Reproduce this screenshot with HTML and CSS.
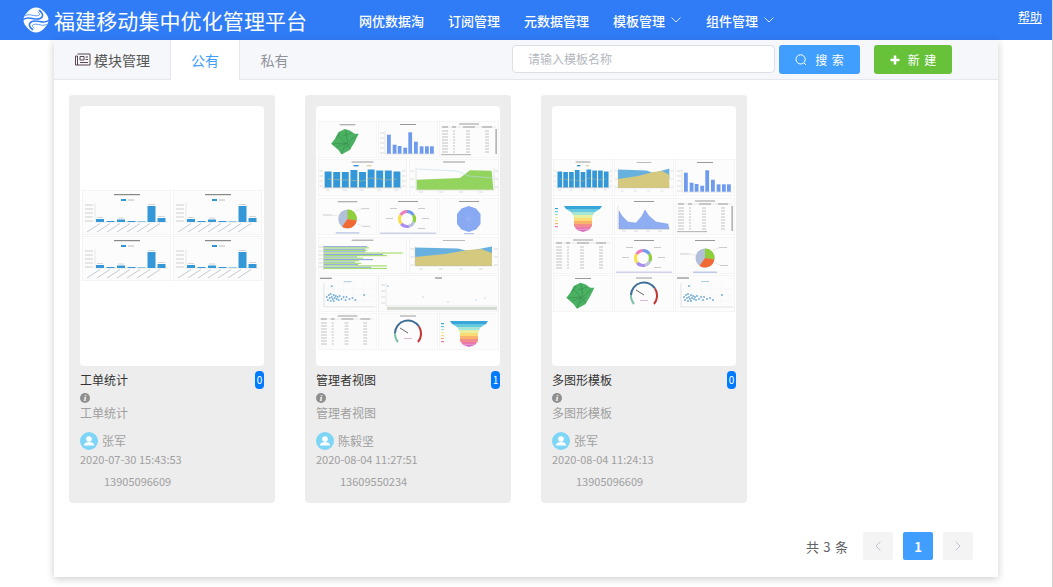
FILE: index.html
```html
<!DOCTYPE html>
<html lang="en">

    <head>
        <meta charset="UTF-8">
        <meta name="viewport" content="width=device-width, initial-scale=1.0">
        <title>福建移动集中优化管理平台</title>
        <link rel="stylesheet" href="styles.css">
    </head>

    <body>
        <!-- chart pieces used by the three template thumbnails -->
        <svg class="defs" xmlns="http://www.w3.org/2000/svg">
            <defs>
                <clipPath id="funnelClip">
                    <polygon points="11,8 49,8 47,11 42,14 40,17 39,20 39,28 36,32 30,34 24,32 21,28 21,20 20,17 18,14 13,11" />
                </clipPath>
            </defs>
            <symbol id="tile" viewBox="0 0 60 37" preserveAspectRatio="none">
                <rect width="60" height="37" fill="#fcfcfc" stroke="#ececec" stroke-width="0.8" />
            </symbol>
            <symbol id="bars" viewBox="0 0 60 37" preserveAspectRatio="none">
                <rect x="22" y="3" width="16" height="1" fill="#999" />
                <path d="M7 10V33H57" stroke="#ccc" stroke-width="0.5" fill="none" />
                <path d="M2 12H6M2 17H6M2 22H6M2 27H6M2 32H6" stroke="#ccc" stroke-width="0.7" />
                <g fill="#6f9bef">
                    <rect x="9" y="13.7" width="3.8" height="19" />
                    <rect x="14.7" y="23.7" width="3.8" height="9" />
                    <rect x="19.7" y="25" width="3.8" height="7.7" />
                    <rect x="25.3" y="26.7" width="3.8" height="6" />
                    <rect x="30.3" y="11.3" width="3.8" height="21.4" />
                    <rect x="36" y="20.7" width="3.8" height="12" />
                    <rect x="41.7" y="25.3" width="3.8" height="7.4" />
                    <rect x="47" y="25.3" width="3.8" height="7.4" />
                    <rect x="52" y="25.3" width="3.8" height="7.4" />
                </g>
            </symbol>
            <symbol id="map" viewBox="0 0 60 37">
                <rect x="22" y="3" width="16" height="1" fill="#999" />
                <polygon points="20.7,11 27.3,7.7 32.3,9.3 37.3,12.7 41.3,12.7 37.3,21 32.3,29.3 24,33.7 20.7,29.3 13.3,22.7 17.3,17.7" fill="#4cb263" />
                <path d="M20 14L28 22L24 33M28 9L30 22L38 15M15 23L28 22L33 28M23 11L18 18M25 15L34 12M19 26L30 22M27 28L33 22" stroke="#2f8045" stroke-width="0.5" fill="none" />
            </symbol>
            <symbol id="table" viewBox="0 0 60 37" preserveAspectRatio="none">
                <rect x="20" y="2.5" width="20" height="1" fill="#999" />
                <rect x="2" y="5" width="55" height="2" fill="#f2f2f2" />
                <path d="M3 6H9M13 6H17M24 6H36M43 6H53" stroke="#777" stroke-width="0.7" />
                <g stroke="#aaa" stroke-width="0.7">
                    <path d="M3 10H9M14 10H16M27 10H31M46 10H50" />
                    <path d="M3 13H9M14 13H16M27 13H31M46 13H50" />
                    <path d="M3 16H9M14 16H16M27 16H31M46 16H50" />
                    <path d="M3 19H9M14 19H16M27 19H31M46 19H50" />
                    <path d="M3 22H9M14 22H16M27 22H31M46 22H50" />
                    <path d="M3 25H9M14 25H16M27 25H31M46 25H50" />
                    <path d="M3 28H9M14 28H16M27 28H31M46 28H50" />
                    <path d="M3 31H9M14 31H16M27 31H31M46 31H50" />
                </g>
            </symbol>
            <symbol id="scrollbars" viewBox="0 0 60 37" preserveAspectRatio="none">
                <rect x="56.5" y="8" width="1.2" height="25" fill="#999" />
                <rect x="2" y="33" width="30" height="1.2" fill="#bbb" />
            </symbol>
            <symbol id="combo" viewBox="0 0 90 37" preserveAspectRatio="none">
                <rect x="34" y="2.5" width="22" height="1" fill="#999" />
                <rect x="36" y="6" width="5" height="1.4" fill="#2f95d6" />
                <rect x="49" y="6" width="5" height="1.4" fill="#dcd6a8" />
                <g fill="#3498d8">
                    <rect x="6.7" y="12.5" width="7" height="16" />
                    <rect x="15.4" y="13" width="7" height="15.5" />
                    <rect x="24.1" y="13" width="7" height="15.5" />
                    <rect x="32.8" y="11" width="7" height="17.5" />
                    <rect x="41.5" y="13" width="7" height="15.5" />
                    <rect x="50.2" y="10.5" width="7" height="18" />
                    <rect x="58.9" y="11.5" width="7" height="17" />
                    <rect x="67.6" y="11.5" width="7" height="17" />
                    <rect x="76.3" y="12.5" width="7" height="16" />
                </g>
                <polyline points="10,20 28,21 45,22 54,19 70,21 80,20" fill="none" stroke="#c8c28e" stroke-width="0.5" />
                <path d="M5 28.8H85" stroke="#999" stroke-width="0.4" />
                <path d="M1.5 12H5M1.5 17H5M1.5 22H5M1.5 27H5M85 12H88.5M85 17H88.5M85 22H88.5M85 27H88.5M8 31H12M25 31H29M42 31H46M60 31H64M77 31H81" stroke="#ccc" stroke-width="0.7" />
            </symbol>
            <symbol id="areaGreen" viewBox="0 0 90 37" preserveAspectRatio="none">
                <rect x="34" y="2.5" width="22" height="1" fill="#999" />
                <polygon points="7.7,20.7 51,19 61,11.3 82.7,11.7 84.3,30.7 7.7,30.7" fill="#93d45e" />
                <polyline points="7.7,10 48,12 60,17 84,19" fill="none" stroke="#bcd8ec" stroke-width="0.6" />
                <path d="M7 9V31H85V9" stroke="#bbb" stroke-width="0.4" fill="none" />
                <path d="M1.5 12H5M1.5 20H5M1.5 28H5M86 12H89M86 20H89M86 28H89M10 33H14M30 33H34M50 33H54M70 33H74" stroke="#ccc" stroke-width="0.7" />
            </symbol>
            <symbol id="areaYellow" viewBox="0 0 90 37" preserveAspectRatio="none">
                <rect x="34" y="3" width="22" height="1" fill="#bbb" />
                <polygon points="6,10.5 49,11.5 59,14 83,9.5 83,20 6,20" fill="#68b1df" />
                <polygon points="6,20 36,17 59,13 72,12 83,16 83,29 6,29" fill="#d5c97f" />
                <path d="M6 9V29H84" stroke="#bbb" stroke-width="0.4" fill="none" />
                <path d="M1.5 12H5M1.5 20H5M1.5 28H5M85 12H89M85 20H89M85 28H89M10 32H14M30 32H34M50 32H54M70 32H74" stroke="#ccc" stroke-width="0.7" />
            </symbol>
            <symbol id="pie" viewBox="0 0 60 37">
                <rect x="20" y="3" width="20" height="1" fill="#999" />
                <circle cx="30" cy="21" r="9.5" fill="#b3c0da" />
                <path d="M30 21V11.5A9.5 9.5 0 0 1 39.4 22.6Z" fill="#8fcf3a" />
                <path d="M30 21L39.4 22.6A9.5 9.5 0 0 1 24.5 28.8Z" fill="#f26a33" />
                <path d="M38 13L44 11M40 26L45 28M21 18L14 17" stroke="#ccc" stroke-width="0.4" />
                <g fill="#ccc">
                    <rect x="44" y="10" width="8" height="1" />
                    <rect x="45" y="28" width="8" height="1" />
                    <rect x="5" y="16.5" width="9" height="1" />
                </g>
                <rect x="18" y="34.5" width="24" height="1.4" fill="#b9c7e4" />
            </symbol>
            <symbol id="donut" viewBox="0 0 60 37">
                <rect x="20" y="3" width="20" height="1" fill="#999" />
                <g fill="none" stroke-width="3.2" transform="rotate(-90 29 21)">
                    <circle cx="29" cy="21" r="7.5" pathLength="100" stroke="#6f9bef" stroke-dasharray="16 100" stroke-dashoffset="0" />
                    <circle cx="29" cy="21" r="7.5" pathLength="100" stroke="#8fcf3a" stroke-dasharray="16 100" stroke-dashoffset="-16" />
                    <circle cx="29" cy="21" r="7.5" pathLength="100" stroke="#b8c4d8" stroke-dasharray="14 100" stroke-dashoffset="-32" />
                    <circle cx="29" cy="21" r="7.5" pathLength="100" stroke="#a98cf0" stroke-dasharray="18 100" stroke-dashoffset="-46" />
                    <circle cx="29" cy="21" r="7.5" pathLength="100" stroke="#f5e24f" stroke-dasharray="20 100" stroke-dashoffset="-64" />
                    <circle cx="29" cy="21" r="7.5" pathLength="100" stroke="#f07fc0" stroke-dasharray="16 100" stroke-dashoffset="-84" />
                </g>
                <g fill="#ccc">
                    <rect x="40" y="10" width="7" height="1" />
                    <rect x="44" y="20" width="7" height="1" />
                    <rect x="40" y="30" width="7" height="1" />
                    <rect x="12" y="10" width="7" height="1" />
                    <rect x="8" y="20" width="7" height="1" />
                </g>
                <rect x="2" y="34.5" width="56" height="1.4" fill="#ccd0e6" />
            </symbol>
            <symbol id="radar" viewBox="0 0 60 37">
                <rect x="20" y="3" width="20" height="1" fill="#999" />
                <polygon points="29.7,8 37,10.5 41.5,16 41.5,26 37,31.5 29.7,34 22.5,31.5 18,26 18,16 22.5,10.5" fill="#87a8f2" />
                <path d="M29.7 8V34M18 16L41.5 26M18 26L41.5 16M22.5 10.5L37 31.5M37 10.5L22.5 31.5" stroke="#a0bbf5" stroke-width="0.3" />
                <rect x="25" y="35" width="10" height="1.2" fill="#b9c7e4" />
            </symbol>
            <symbol id="hbars" viewBox="0 0 90 37">
                <rect x="34" y="2.5" width="22" height="1" fill="#999" />
                <path d="M5.7 8V33" stroke="#bbb" stroke-width="0.4" />
                <g fill="#8fa6e0">
                    <rect x="5.7" y="9" width="44" height="1.2" />
                    <rect x="5.7" y="11.6" width="42" height="1.2" />
                    <rect x="5.7" y="14.2" width="42" height="1.2" />
                    <rect x="5.7" y="16.8" width="60" height="1.2" />
                    <rect x="5.7" y="19.4" width="34" height="1.2" />
                    <rect x="5.7" y="22" width="50" height="1.2" />
                    <rect x="5.7" y="24.6" width="32" height="1.2" />
                    <rect x="5.7" y="27.2" width="35" height="1.2" />
                    <rect x="5.7" y="29.8" width="48" height="1.2" />
                </g>
                <g fill="#a5de72">
                    <rect x="5.7" y="10.2" width="46" height="1.2" />
                    <rect x="5.7" y="12.8" width="44" height="1.2" />
                    <rect x="5.7" y="15.4" width="80" height="1.2" />
                    <rect x="5.7" y="18" width="64" height="1.2" />
                    <rect x="5.7" y="20.6" width="40" height="1.2" />
                    <rect x="5.7" y="23.2" width="36" height="1.2" />
                    <rect x="5.7" y="25.8" width="38" height="1.2" />
                    <rect x="5.7" y="28.4" width="64" height="1.2" />
                    <rect x="5.7" y="31" width="64" height="1.2" />
                </g>
                <path d="M1 10H5M1 14H5M1 18H5M1 22H5M1 26H5M1 30H5" stroke="#ccc" stroke-width="0.7" />
            </symbol>
            <symbol id="scatter" viewBox="0 0 60 37">
                <rect x="2" y="2.5" width="12" height="1" fill="#777" />
                <rect x="26" y="6" width="8" height="1" fill="#a9cbe3" />
                <path d="M6 8V32H58" stroke="#bbb" stroke-width="0.4" fill="none" />
                <path d="M6 14H58M6 20H58M6 26H58M16 8V32M26 8V32M36 8V32M46 8V32" stroke="#eee" stroke-width="0.3" />
                <g fill="#5fa3d3" opacity="0.85">
                    <circle cx="9" cy="22" r="1" /><circle cx="10" cy="25" r="1" /><circle cx="11" cy="20" r="1" />
                    <circle cx="12" cy="23" r="1" /><circle cx="13" cy="26" r="1" /><circle cx="13" cy="19" r="1" />
                    <circle cx="14" cy="22" r="1" /><circle cx="15" cy="24" r="1" /><circle cx="16" cy="20" r="1" />
                    <circle cx="16" cy="26" r="1" /><circle cx="17" cy="23" r="1" /><circle cx="18" cy="21" r="1" />
                    <circle cx="19" cy="24" r="1" /><circle cx="20" cy="22" r="1" /><circle cx="21" cy="25" r="1" />
                    <circle cx="22" cy="21" r="1" /><circle cx="24" cy="24" r="1" /><circle cx="26" cy="22" r="1" />
                    <circle cx="28" cy="25" r="1" /><circle cx="29" cy="22" r="1" /><circle cx="32" cy="24" r="1" />
                    <circle cx="35" cy="23" r="1" /><circle cx="38" cy="25" r="1" /><circle cx="14" cy="11" r="1" />
                    <circle cx="47" cy="20" r="1" />
                </g>
            </symbol>
            <symbol id="scatterWide" viewBox="0 0 121 37">
                <rect x="57" y="2.5" width="7" height="1" fill="#777" />
                <path d="M8 8V31H119" stroke="#ccc" stroke-width="0.4" fill="none" />
                <path d="M3 10H7M3 16H7M3 22H7M3 28H7" stroke="#ccc" stroke-width="0.7" />
                <g fill="#bdd6e8">
                    <circle cx="10" cy="11" r="1" /><circle cx="45" cy="22" r="0.8" /><circle cx="98" cy="25" r="0.8" />
                    <circle cx="107" cy="23" r="0.8" /><circle cx="70" cy="27" r="0.8" />
                </g>
                <rect x="9" y="32" width="110" height="3" fill="#d6dbd2" />
            </symbol>
            <symbol id="gauge" viewBox="0 0 60 37">
                <rect x="22" y="2.5" width="16" height="1" fill="#999" />
                <g fill="none" stroke-width="2">
                    <path d="M20 29A13 13 0 0 1 17 20" stroke="#7fc0a8" />
                    <path d="M17 20A13 13 0 0 1 41 13.5" stroke="#3f6e97" />
                    <path d="M41 13.5A13 13 0 0 1 40 29" stroke="#c23531" />
                </g>
                <path d="M30 20L22 15" stroke="#555" stroke-width="0.9" />
                <rect x="26" y="25" width="8" height="1" fill="#d9b8d6" />
            </symbol>
            <symbol id="funnel" viewBox="0 0 60 37">
                <g clip-path="url(#funnelClip)">
                    <rect x="10" y="8" width="40" height="3" fill="#39a6d9" />
                    <rect x="10" y="11" width="40" height="3" fill="#66c9e0" />
                    <rect x="10" y="14" width="40" height="3" fill="#a5e6d6" />
                    <rect x="10" y="17" width="40" height="3" fill="#e6eea0" />
                    <rect x="10" y="20" width="40" height="3" fill="#fbdc74" />
                    <rect x="10" y="23" width="40" height="3" fill="#f9b36c" />
                    <rect x="10" y="26" width="40" height="3" fill="#f38c8c" />
                    <rect x="10" y="29" width="40" height="2.5" fill="#ea79ae" />
                    <rect x="10" y="31.5" width="40" height="3" fill="#d76fc4" />
                </g>
                <g>
                    <rect x="2" y="10" width="3" height="1.2" fill="#39a6d9" />
                    <rect x="2" y="13" width="3" height="1.2" fill="#66c9e0" />
                    <rect x="2" y="16" width="3" height="1.2" fill="#a5e6d6" />
                    <rect x="2" y="19" width="3" height="1.2" fill="#e6eea0" />
                    <rect x="2" y="22" width="3" height="1.2" fill="#fbdc74" />
                    <rect x="2" y="25" width="3" height="1.2" fill="#f9b36c" />
                    <rect x="2" y="28" width="3" height="1.2" fill="#ea79ae" />
                </g>
            </symbol>
            <symbol id="areaBlue" viewBox="0 0 60 37">
                <rect x="20" y="3" width="20" height="1" fill="#999" />
                <polygon points="5,13 8,18 14,24 22,25 28,18 31,12 35,18 42,24 54,26 55,31 5,31" fill="#8fadf2" stroke="#6f91e6" stroke-width="0.4" />
                <path d="M4 8V31H56" stroke="#bbb" stroke-width="0.4" fill="none" />
                <path d="M8 33H12M20 33H24M32 33H36M44 33H48" stroke="#ccc" stroke-width="0.7" />
            </symbol>
            <symbol id="ticket" viewBox="0 0 89 45">
                <rect width="89" height="45" fill="#fcfcfc" stroke="#e8e8e8" stroke-width="0.8" />
                <rect x="32" y="4" width="26" height="1.2" fill="#888" />
                <rect x="39" y="9" width="5" height="2" fill="#2f95d6" />
                <rect x="46" y="9.5" width="6" height="1" fill="#bbb" />
                <path d="M13 13V32H86" stroke="#ccc" stroke-width="0.4" fill="none" />
                <g fill="#3498d8">
                    <rect x="14" y="29" width="8" height="3" />
                    <rect x="24.5" y="31" width="8" height="1" />
                    <rect x="35" y="29.5" width="8" height="2.5" />
                    <rect x="45.5" y="31" width="8" height="1" />
                    <rect x="55.5" y="31.5" width="8" height="0.5" />
                    <rect x="65.5" y="16" width="8" height="16" />
                    <rect x="75.5" y="28" width="8" height="4" />
                </g>
                <g stroke="#b4bdc3" stroke-width="0.8">
                    <path d="M5 42L18 33.5M15 42L28 33.5M25 42L38 33.5M35 42L48 33.5M45 42L58 33.5M55 42L68 33.5M65 42L78 33.5" />
                </g>
                <path d="M3 15H11M3 19H11M3 23H11M3 27H11M3 31H11" stroke="#bbb" stroke-width="0.7" />
                <path d="M15 27.5H21M36 28H42M66 14.5H73M76 26.5H83" stroke="#bbb" stroke-width="0.6" />
            </symbol>
        </svg>

        <div class="topbar">
            <div class="brand">
                <svg class="brand-logo" viewBox="0 0 26 26" xmlns="http://www.w3.org/2000/svg">
                    <path d="M13 0.5C16 0.5 18.5 2 21 4.5C24 7.5 25.5 10 25.5 13C25.5 16 24 18.5 21 21.5C18.5 24 16 25.5 13 25.5C10 25.5 7.5 24 5 21.5C2 18.5 0.5 16 0.5 13C0.5 10 2 7.5 5 4.5C7.5 2 10 0.5 13 0.5Z" fill="#fff" />
                    <g fill="none" stroke="#307cf7" stroke-linecap="round">
                        <path stroke-width="1.6" d="M0.5 12.5C6 8 11 14 17 11.5C20.5 10 20.5 6.5 16.5 3.5" />
                        <path stroke-width="0.8" d="M2.5 8.5C7 6 11 10 15.5 8.5C17 8 17 6.5 15 5" />
                        <path stroke-width="1.6" d="M25.5 13.5C20 18 15 12 9 14.5C5.5 16 5.5 19.5 9.5 22.5" />
                        <path stroke-width="0.8" d="M23.5 17.5C19 20 15 16 10.5 17.5C9 18 9 19.5 11 21" />
                    </g>
                </svg>
                <span class="brand-name">福建移动集中优化管理平台</span>
            </div>
            <div class="nav">
                <a class="nav-item">网优数据淘</a>
                <a class="nav-item">订阅管理</a>
                <a class="nav-item">元数据管理</a>
                <a class="nav-item">模板管理
                    <svg class="chevron" viewBox="0 0 10 6"><path d="M0.5 0.5L5 5L9.5 0.5" /></svg>
                </a>
                <a class="nav-item">组件管理
                    <svg class="chevron" viewBox="0 0 10 6"><path d="M0.5 0.5L5 5L9.5 0.5" /></svg>
                </a>
            </div>
            <a class="help">帮助</a>
        </div>

        <div class="panel">
            <div class="tabs">
                <div class="tab-title">
                    <svg class="tab-icon" viewBox="0 0 17 13">
                        <path d="M3.5 1H16V12H1.5V3H3.5V12" fill="none" stroke="#5b4750" stroke-width="1" />
                        <path d="M6 3.5H10V7H6ZM11.5 4H14M11.5 6.5H14M6 9.5H14" fill="none" stroke="#5b4750" stroke-width="1" />
                    </svg>
                    模块管理
                </div>
                <div class="tab tab-active">公有</div>
                <div class="tab">私有</div>
                <div class="tools">
                    <div class="search-input">请输入模板名称</div>
                    <button class="btn btn-search">
                        <svg class="btn-icon" viewBox="0 0 12 12">
                            <circle cx="5.6" cy="5.4" r="4.6" fill="none" stroke="#fff" stroke-width="1" />
                            <path d="M9 9L11 11" stroke="#fff" stroke-width="1" />
                        </svg>
                        搜 索
                    </button>
                    <button class="btn btn-new">
                        <svg class="btn-icon" viewBox="0 0 10 10"><path d="M5 0.5V9.5M0.5 5H9.5" stroke="#fff" stroke-width="2.6" /></svg>
                        新 建
                    </button>
                </div>
            </div>

            <div class="cards">
                <div class="card">
                    <svg class="thumb" viewBox="0 0 184 260">
                        <use href="#ticket" x="2" y="84" width="89" height="45" />
                        <use href="#ticket" x="93" y="84" width="89" height="45" />
                        <use href="#ticket" x="2" y="130" width="89" height="45" />
                        <use href="#ticket" x="93" y="130" width="89" height="45" />
                    </svg>
                    <div class="card-title"><span class="title-text">工单统计</span><span class="badge">0</span></div>
                    <div class="info"><span class="info-icon">i</span></div>
                    <div class="desc">工单统计</div>
                    <div class="author">
                        <svg class="avatar" viewBox="0 0 18 18">
                            <circle cx="9" cy="9" r="9" fill="#7fd5f6" />
                            <circle cx="9" cy="7" r="2.8" fill="#fff" />
                            <path d="M3.8 13.5C4.2 10.8 6.5 10 9 10C11.5 10 13.8 10.8 14.2 13.5Z" fill="#fff" />
                        </svg>
                        <span class="author-name">张军</span>
                    </div>
                    <div class="date">2020-07-30 15:43:53</div>
                    <div class="phone">13905096609</div>
                </div>

                <div class="card">
                    <svg class="thumb" viewBox="0 0 184 260">
                        <use href="#tile" x="2" y="15" width="59" height="37" />
                        <use href="#tile" x="62" y="15" width="60" height="37" />
                        <use href="#tile" x="123" y="15" width="60" height="37" />
                        <use href="#map" x="2" y="15" width="59" height="37" />
                        <use href="#bars" x="62" y="15" width="60" height="37" />
                        <use href="#table" x="123" y="15" width="60" height="37" />
                        <use href="#scrollbars" x="123" y="15" width="60" height="37" />
                        <use href="#tile" x="2" y="53" width="89" height="37" />
                        <use href="#tile" x="93" y="53" width="90" height="37" />
                        <use href="#combo" x="2" y="53" width="89" height="37" />
                        <use href="#areaGreen" x="93" y="53" width="90" height="37" />
                        <use href="#tile" x="2" y="92" width="59" height="37" />
                        <use href="#tile" x="62" y="92" width="60" height="37" />
                        <use href="#tile" x="123" y="92" width="60" height="37" />
                        <use href="#pie" x="2" y="92" width="59" height="37" />
                        <use href="#donut" x="62" y="92" width="60" height="37" />
                        <use href="#radar" x="123" y="92" width="60" height="37" />
                        <use href="#tile" x="2" y="131" width="89" height="37" />
                        <use href="#tile" x="93" y="131" width="90" height="37" />
                        <use href="#hbars" x="2" y="131" width="89" height="37" />
                        <use href="#areaYellow" x="93" y="131" width="90" height="37" />
                        <use href="#tile" x="2" y="169" width="59" height="37" />
                        <use href="#tile" x="62" y="169" width="121" height="37" />
                        <use href="#scatter" x="2" y="169" width="59" height="37" />
                        <use href="#scatterWide" x="62" y="169" width="121" height="37" />
                        <use href="#tile" x="2" y="207" width="59" height="37" />
                        <use href="#tile" x="62" y="207" width="60" height="37" />
                        <use href="#tile" x="123" y="207" width="60" height="37" />
                        <use href="#table" x="2" y="207" width="59" height="37" />
                        <use href="#gauge" x="62" y="207" width="60" height="37" />
                        <use href="#funnel" x="123" y="207" width="60" height="37" />
                    </svg>
                    <div class="card-title"><span class="title-text">管理者视图</span><span class="badge">1</span></div>
                    <div class="info"><span class="info-icon">i</span></div>
                    <div class="desc">管理者视图</div>
                    <div class="author">
                        <svg class="avatar" viewBox="0 0 18 18">
                            <circle cx="9" cy="9" r="9" fill="#7fd5f6" />
                            <circle cx="9" cy="7" r="2.8" fill="#fff" />
                            <path d="M3.8 13.5C4.2 10.8 6.5 10 9 10C11.5 10 13.8 10.8 14.2 13.5Z" fill="#fff" />
                        </svg>
                        <span class="author-name">陈毅坚</span>
                    </div>
                    <div class="date">2020-08-04 11:27:51</div>
                    <div class="phone">13609550234</div>
                </div>

                <div class="card">
                    <svg class="thumb" viewBox="0 0 184 260">
                        <use href="#tile" x="1" y="53" width="60" height="37" />
                        <use href="#tile" x="62" y="53" width="60" height="37" />
                        <use href="#tile" x="123" y="53" width="60" height="37" />
                        <use href="#combo" x="1" y="53" width="60" height="37" />
                        <use href="#areaYellow" x="62" y="53" width="60" height="37" />
                        <use href="#bars" x="123" y="53" width="60" height="37" />
                        <use href="#tile" x="1" y="92" width="60" height="37" />
                        <use href="#tile" x="62" y="92" width="60" height="37" />
                        <use href="#tile" x="123" y="92" width="60" height="37" />
                        <use href="#funnel" x="1" y="92" width="60" height="37" />
                        <use href="#areaBlue" x="62" y="92" width="60" height="37" />
                        <use href="#table" x="123" y="92" width="60" height="37" />
                        <use href="#scrollbars" x="123" y="92" width="60" height="37" />
                        <use href="#tile" x="1" y="131" width="60" height="37" />
                        <use href="#tile" x="62" y="131" width="60" height="37" />
                        <use href="#tile" x="123" y="131" width="60" height="37" />
                        <use href="#table" x="1" y="131" width="60" height="37" />
                        <use href="#donut" x="62" y="131" width="60" height="37" />
                        <use href="#pie" x="123" y="131" width="60" height="37" />
                        <use href="#tile" x="1" y="169" width="60" height="37" />
                        <use href="#tile" x="62" y="169" width="60" height="37" />
                        <use href="#tile" x="123" y="169" width="60" height="37" />
                        <use href="#map" x="1" y="169" width="60" height="37" />
                        <use href="#gauge" x="62" y="169" width="60" height="37" />
                        <use href="#scatter" x="123" y="169" width="60" height="37" />
                    </svg>
                    <div class="card-title"><span class="title-text">多图形模板</span><span class="badge">0</span></div>
                    <div class="info"><span class="info-icon">i</span></div>
                    <div class="desc">多图形模板</div>
                    <div class="author">
                        <svg class="avatar" viewBox="0 0 18 18">
                            <circle cx="9" cy="9" r="9" fill="#7fd5f6" />
                            <circle cx="9" cy="7" r="2.8" fill="#fff" />
                            <path d="M3.8 13.5C4.2 10.8 6.5 10 9 10C11.5 10 13.8 10.8 14.2 13.5Z" fill="#fff" />
                        </svg>
                        <span class="author-name">张军</span>
                    </div>
                    <div class="date">2020-08-04 11:24:13</div>
                    <div class="phone">13905096609</div>
                </div>
            </div>

            <div class="pager">
                <span class="pager-total">共 3 条</span>
                <span class="page-btn">
                    <svg class="page-arrow" viewBox="0 0 6 10"><path d="M5.5 0.5L1 5L5.5 9.5" /></svg>
                </span>
                <span class="page-btn page-current">1</span>
                <span class="page-btn">
                    <svg class="page-arrow" viewBox="0 0 6 10"><path d="M0.5 0.5L5 5L0.5 9.5" /></svg>
                </span>
            </div>
        </div>
    </body>

</html>
```

FILE: styles.css
```css
html {
    height: 100%;
}

body {
    margin: 0px;
    height: 587px;
    overflow: hidden;
    box-sizing: border-box;
    border-right: 1px solid #d4d0c8;
    background: #fff;
    font-family: "Noto Sans CJK SC", "Liberation Sans", sans-serif;
    font-size: 12px;
    color: #a0a0a0;
}

body * {
    box-sizing: border-box;
}

.defs {
    display: block;
    width: 0px;
    height: 0px;
}

.topbar {
    display: flex;
    height: 40px;
    background: #307cf7;
    color: #fff;
}

.brand {
    display: flex;
    align-items: center;
    width: 359px;
    padding-left: 23px;
}

.brand-logo {
    width: 26px;
    height: 26px;
    margin-right: 5px;
}

.brand-name {
    font-size: 21px;
    letter-spacing: 0.1px;
}

.nav {
    display: flex;
    align-items: center;
    gap: 24px;
    flex-grow: 1;
}

.nav-item {
    display: flex;
    align-items: center;
    font-size: 13px;
    font-weight: 500;
}

.chevron {
    width: 10px;
    height: 6px;
    margin: 0px 1px 0px 6px;
    fill: none;
    stroke: #fff;
    stroke-width: 0.8;
}

.help {
    margin: 8px 10px 0px 0px;
    font-size: 12px;
    text-decoration: underline;
}

.panel {
    width: 944px;
    height: 537px;
    margin-left: 54px;
    background: #fff;
    box-shadow: 0px 2px 8px rgba(0, 0, 0, 0.2);
}

.tabs {
    display: flex;
    height: 40px;
    background: #f5f7fa;
    border-bottom: 1px solid #e4e7ed;
}

.tab-title {
    display: flex;
    align-items: center;
    width: 117px;
    padding-left: 20px;
    font-size: 14px;
    color: #555;
    border-right: 1px solid #e4e7ed;
}

.tab-icon {
    width: 17px;
    height: 13px;
    margin-right: 3px;
}

.tab {
    display: flex;
    align-items: center;
    justify-content: center;
    width: 69px;
    font-size: 14px;
    color: #909399;
}

.tab-active {
    height: 40px;
    background: #fff;
    color: #409eff;
    border-right: 1px solid #e4e7ed;
}

.tools {
    display: flex;
    align-items: flex-start;
    margin: 5px 0px 0px 203px;
}

.search-input {
    width: 263px;
    height: 28px;
    padding-left: 15px;
    line-height: 26px;
    font-size: 12px;
    color: #b4b8c0;
    background: #fff;
    border: 1px solid #dcdfe6;
    border-radius: 4px;
}

.btn {
    display: flex;
    align-items: center;
    justify-content: center;
    height: 29px;
    padding: 0px;
    font: inherit;
    word-spacing: 2px;
    color: #fff;
    border: none;
    border-radius: 3px;
}

.btn-search {
    width: 81px;
    margin-left: 4px;
    background: #409eff;
}

.btn-new {
    width: 78px;
    margin-left: 14px;
    background: #67c23a;
}

.btn-icon {
    width: 12px;
    height: 12px;
    margin-right: 8px;
}

.btn-new .btn-icon {
    width: 10px;
    height: 10px;
}

.cards {
    display: flex;
    gap: 30px;
    height: 437px;
    padding: 15px 0px 0px 15px;
}

.card {
    width: 206px;
    height: 408px;
    padding: 11px;
    background: #ededed;
    border-radius: 4px;
}

.thumb {
    display: block;
    width: 184px;
    height: 260px;
    background: #fff;
    border-radius: 4px;
}

.card-title {
    display: flex;
    align-items: center;
    justify-content: space-between;
    height: 18px;
    margin-top: 5px;
    color: #333;
}

.title-text {
    padding-bottom: 2px;
}

.badge {
    width: 9px;
    height: 18px;
    line-height: 18px;
    text-align: center;
    font-size: 10px;
    color: #fff;
    background: #007bff;
    border-radius: 4px;
}

.info {
    display: flex;
    height: 10px;
    margin-top: 4px;
}

.info-icon {
    width: 10px;
    height: 10px;
    line-height: 10px;
    text-align: center;
    font-family: "Liberation Serif", serif;
    font-style: italic;
    font-weight: bold;
    font-size: 9px;
    color: #fff;
    background: #8f8f8f;
    border-radius: 50%;
}

.desc {
    height: 20px;
    line-height: 20px;
}

.author {
    display: flex;
    align-items: center;
    height: 18px;
    margin-top: 9px;
}

.avatar {
    width: 18px;
    height: 18px;
    margin-right: 4px;
}

.author-name {
    padding-bottom: 2px;
}

.date {
    height: 18px;
    line-height: 18px;
    font-size: 11px;
}

.phone {
    height: 18px;
    margin-top: 4px;
    padding-left: 24px;
    line-height: 18px;
    font-size: 11px;
}

.pager {
    display: flex;
    align-items: center;
    justify-content: flex-end;
    gap: 10px;
    height: 28px;
    margin-top: 15px;
    padding-right: 25px;
}

.pager-total {
    margin-right: 5px;
    font-size: 13px;
    word-spacing: 1.5px;
    color: #606266;
}

.page-btn {
    display: flex;
    align-items: center;
    justify-content: center;
    width: 30px;
    height: 28px;
    background: #f4f4f5;
    border-radius: 2px;
}

.page-current {
    font-size: 13px;
    font-weight: bold;
    color: #fff;
    background: #409eff;
}

.page-arrow {
    width: 6px;
    height: 10px;
    fill: none;
    stroke: #c0c4cc;
    stroke-width: 1;
}
```
